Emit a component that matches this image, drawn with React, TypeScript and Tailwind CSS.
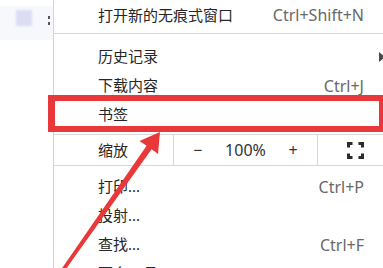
import React from "react";

function Tri() {
  return (
    <svg width="6" height="10" viewBox="0 0 6 10" className="block">
      <path d="M0 0 L6 5 L0 10 Z" fill="#4a4a4a" />
    </svg>
  );
}

function Item({ label, shortcut, arrow }: { label: string; shortcut?: string; arrow?: boolean }) {
  return (
    <div className="h-[29px] shrink-0 flex items-center pl-[44px] pr-[8px]">
      <span className="text-[15px] text-[#262626]">{label}</span>
      <span className="flex-1" />
      {shortcut && <span className="text-[16px] text-[#686868]">{shortcut}</span>}
      <span className="w-[21px] flex justify-end">{arrow && <Tri />}</span>
    </div>
  );
}

function Sep() {
  return <div className="h-px shrink-0 bg-[#d7d7d7]" />;
}

function FullscreenIcon() {
  return (
    <svg width="17" height="17" viewBox="0 0 17 17" className="block">
      <g fill="none" stroke="#2b2b2b" strokeWidth="3" strokeLinecap="butt">
        <path d="M1.5 5.5 V1.5 H5.5" />
        <path d="M11.5 1.5 H15.5 V5.5" />
        <path d="M15.5 11.5 V15.5 H11.5" />
        <path d="M5.5 15.5 H1.5 V11.5" />
      </g>
    </svg>
  );
}

export default function App() {
  return (
    <div className="relative w-[383px] h-[268px] overflow-hidden bg-white flex font-['Noto_Sans','Noto_Sans_CJK_SC',sans-serif]">
      <div className="w-[53px] shrink-0 pt-[6px]">
        <div className="h-[34px] bg-[#f7f8fc] flex items-start pl-[16px] pt-[4px]">
          <div className="w-[16px] h-[16px] bg-[#dcdcf5] blur-[1px]" />
          <div className="ml-[16px] mt-[6px] flex flex-col gap-[3px]">
            <div className="w-[2px] h-[3px] bg-[#555]" />
            <div className="w-[2px] h-[3px] bg-[#555]" />
          </div>
        </div>
      </div>
      <div className="w-[340px] shrink-0 border-l border-[#d4d4d4] flex flex-col">
        <div className="h-[33px] shrink-0 flex items-center pl-[44px] pr-[29px] pb-[3px]">
          <span className="text-[15px] text-[#262626]">打开新的无痕式窗口</span>
          <span className="flex-1" />
          <span className="text-[16px] text-[#686868]">Ctrl+Shift+N</span>
        </div>
        <Sep />
        <div className="h-[8px] shrink-0" />
        <Item label="历史记录" arrow />
        <Item label="下载内容" shortcut="Ctrl+J" />
        <Item label="书签" arrow />
        <div className="h-[5px] shrink-0" />
        <Sep />
        <div className="h-[30px] shrink-0 flex items-stretch">
          <div className="w-[119px] flex items-center pl-[44px]">
            <span className="text-[15px] text-[#262626]">缩放</span>
          </div>
          <div className="w-[144px] border-l border-[#d7d7d7] grid grid-cols-3 items-center text-center text-[16px] text-[#333]">
            <span>−</span>
            <span>100%</span>
            <span>+</span>
          </div>
          <div className="flex-1 border-l border-[#d7d7d7] flex items-center justify-center">
            <FullscreenIcon />
          </div>
        </div>
        <Sep />
        <div className="h-[6px] shrink-0" />
        <Item label="打印..." shortcut="Ctrl+P" />
        <Item label="投射..." />
        <Item label="查找..." shortcut="Ctrl+F" />
        <Item label="更多工具" arrow />
      </div>

      <div className="absolute left-[48px] top-[95px] w-[337px] h-[37px] border-[6px] border-l-[7px] border-[#e8383a]" />
      <svg className="absolute left-0 top-0 pointer-events-none" width="383" height="268" viewBox="0 0 383 268">
        <polygon
          points="160,132 158,154 151.6,149.2 64.5,271 61.5,269 146.6,145.8 139.5,141"
          fill="#e8383a"
        />
      </svg>
    </div>
  );
}
